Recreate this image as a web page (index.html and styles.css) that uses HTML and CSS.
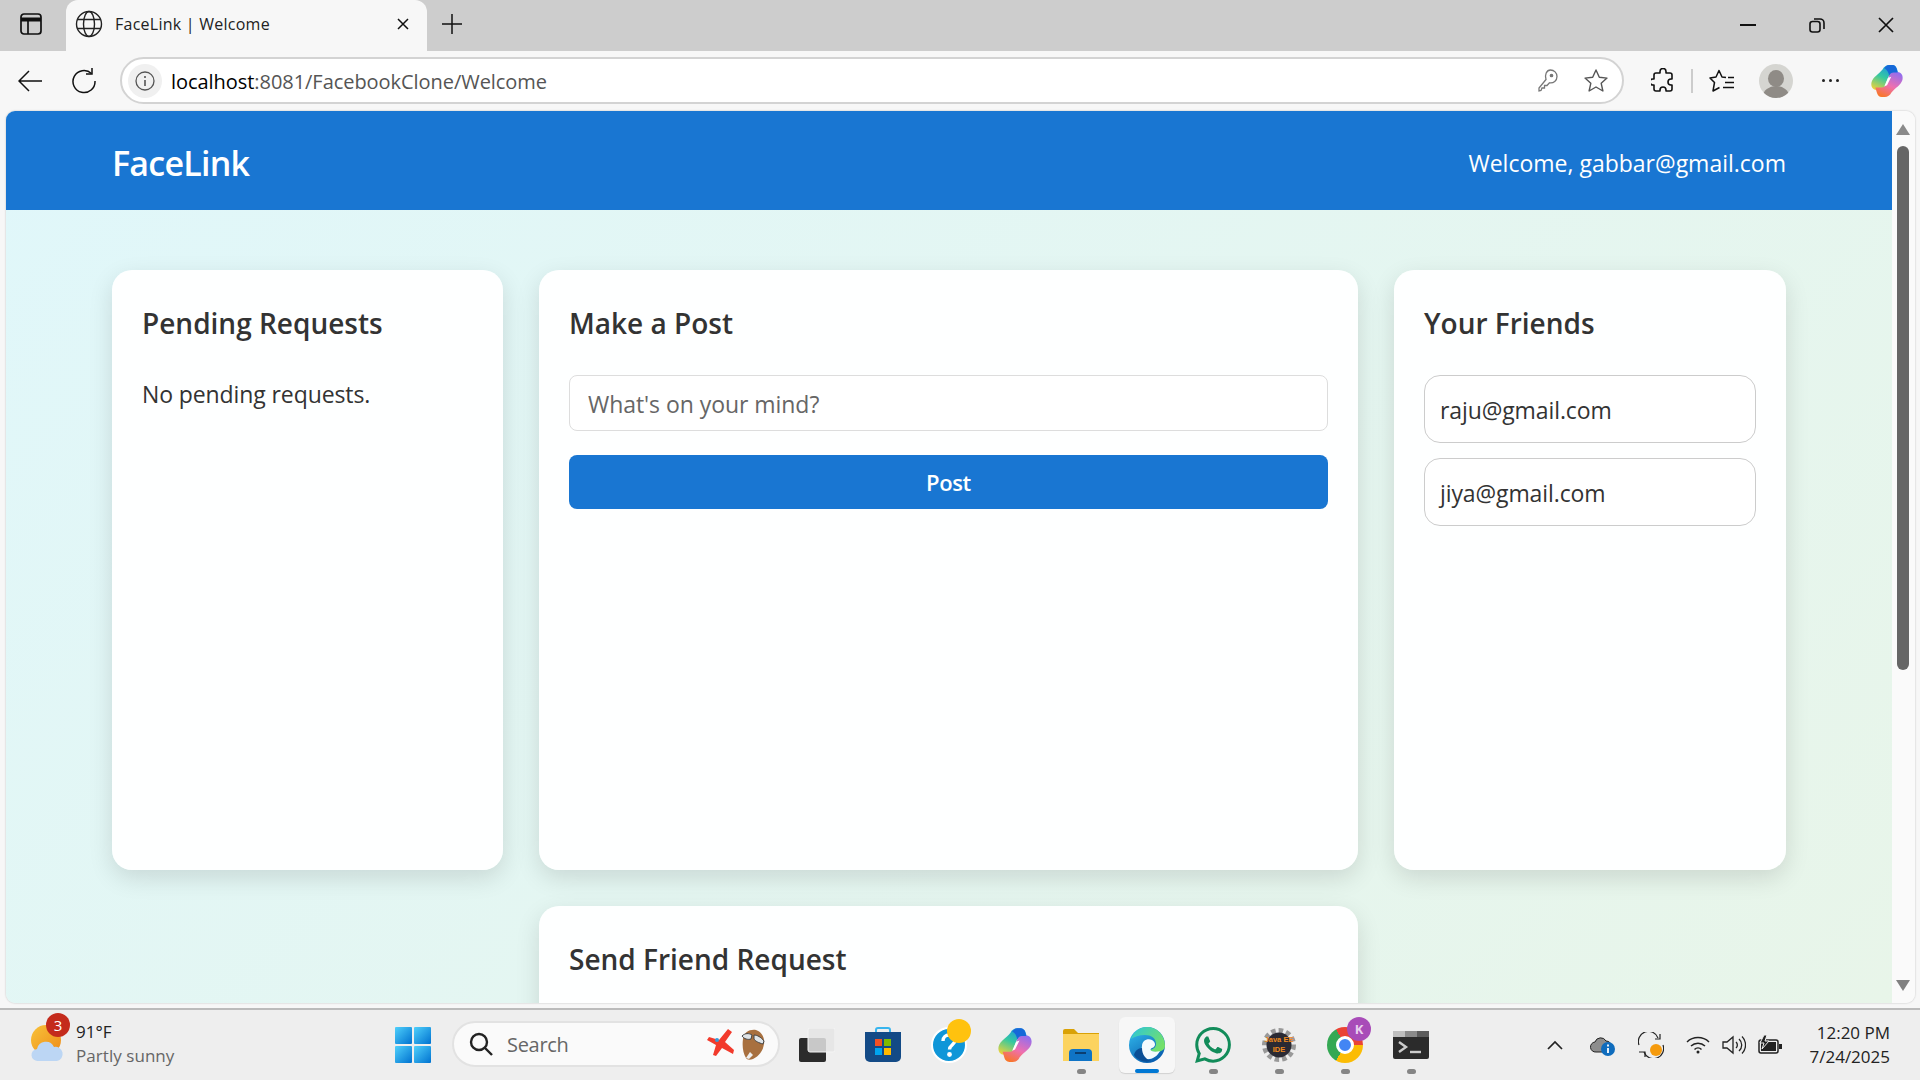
FILE: index.html
```html
<!DOCTYPE html>
<html lang="en">
<head>
  <meta charset="UTF-8">
  <title>FaceLink | Welcome</title>
  <link rel="stylesheet" href="styles.css">
</head>
<body>
  <svg class="defs" width="0" height="0">
    <defs>
      <linearGradient id="cop-a" x1="0.7" y1="0" x2="0.2" y2="1">
        <stop offset="0" stop-color="#1b8fe8"/>
        <stop offset="0.5" stop-color="#35c9a0"/>
        <stop offset="1" stop-color="#e8d23c"/>
      </linearGradient>
      <linearGradient id="cop-b" x1="0.8" y1="0" x2="0.3" y2="1">
        <stop offset="0" stop-color="#8f6ef0"/>
        <stop offset="0.55" stop-color="#ee6fb0"/>
        <stop offset="1" stop-color="#f8762c"/>
      </linearGradient>
      <linearGradient id="edge-a" x1="0" y1="0" x2="0.6" y2="1">
        <stop offset="0" stop-color="#35c1f1"/>
        <stop offset="1" stop-color="#0a5fb0"/>
      </linearGradient>
      <linearGradient id="edge-b" x1="0" y1="0" x2="1" y2="0.6">
        <stop offset="0" stop-color="#2cc6d8"/>
        <stop offset="1" stop-color="#74e06a"/>
      </linearGradient>
      <linearGradient id="win-a" x1="0" y1="0" x2="1" y2="1">
        <stop offset="0" stop-color="#4fd0fb"/>
        <stop offset="1" stop-color="#0072d0"/>
      </linearGradient>
      <linearGradient id="sun-a" x1="0" y1="0" x2="1" y2="1">
        <stop offset="0" stop-color="#f8c33a"/>
        <stop offset="1" stop-color="#ee8a18"/>
      </linearGradient>
      <symbol id="copilot" viewBox="0 0 32 32">
        <path d="M12 5C13 2.500 15.500 1 18 1H21C23.500 1 25 3 25.500 5L27 10H21C19 10 17.500 11 17 13L14 21C13 23.500 11.500 24.500 9 24.500H6C2.500 24.500 .5 21 1.500 17 3 12 8 10 12 5Z" fill="url(#cop-a)"/>
        <path d="M20 27C19 29.500 16.500 31 14 31H11C8.500 31 7 29 6.500 27L5 22H11C13 22 14.500 21 15 19L18 11C19 8.500 20.500 7.500 23 7.500H26C29.500 7.500 31.500 11 30.500 15 29 20 24 22 20 27Z" fill="url(#cop-b)"/>
        <path d="M13.500 4C15 2 16.500 1 18 1H21C23 1 24.500 2.500 25 4.500L26 8H22C20 8 19 9 18 11 17.500 8 16 5 13.500 4Z" fill="#1668d8"/>
        <path d="M17 13L20 12 16 20 13.500 21Z" fill="#fff"/>
      </symbol>
    </defs>
  </svg>

  <div class="desktop">
    <!-- tab strip -->
    <div class="tabstrip">
      <span class="sidebar-btn">
        <svg width="22" height="22" viewBox="0 0 22 22" fill="none" stroke="#111" stroke-width="1.700"><rect x="1" y="1" width="20" height="20" rx="3"/><path d="M1 6.500h20" stroke-width="4"/><path d="M8 7v14"/></svg>
      </span>
      <div class="tab">
        <svg width="28" height="28" viewBox="0 0 28 28" fill="none" stroke="#222" stroke-width="1.400"><circle cx="14" cy="14" r="12.500"/><ellipse cx="14" cy="14" rx="5.500" ry="12.500"/><path d="M2.500 9.500h23M2.500 18.500h23"/></svg>
        <span class="tab-title">FaceLink | Welcome</span>
        <svg class="tab-close" width="14" height="14" viewBox="0 0 14 14" stroke="#111" stroke-width="1.500"><path d="M2 2l10 10M12 2L2 12"/></svg>
      </div>
      <svg class="tab-new" width="22" height="22" viewBox="0 0 22 22" stroke="#111" stroke-width="1.500"><path d="M11 1v20M1 11h20"/></svg>
      <div class="win-btns">
        <span class="win-btn"><svg width="16" height="4" viewBox="0 0 16 4"><path d="M0 2h16" stroke="#111" stroke-width="2"/></svg></span>
        <span class="win-btn"><svg width="16" height="16" viewBox="0 0 16 16" fill="none" stroke="#111" stroke-width="1.600"><rect x="1" y="4.500" width="10" height="10.500" rx="2.500"/><path d="M5 2h6a4 4 0 0 1 4 4v6"/></svg></span>
        <span class="win-btn"><svg width="16" height="16" viewBox="0 0 16 16" stroke="#111" stroke-width="1.700"><path d="M1 1l14 14M15 1L1 15"/></svg></span>
      </div>
    </div>

    <!-- address bar -->
    <div class="toolbar">
      <span class="tool tool-back"><svg width="24" height="22" viewBox="0 0 24 22" fill="none" stroke="#111" stroke-width="1.500"><path d="M24 11H1M11 1L1 11l10 10"/></svg></span>
      <span class="tool tool-reload"><svg width="26" height="26" viewBox="0 0 26 26" fill="none" stroke="#111" stroke-width="1.500"><path d="M20.500 5.500A11 11 0 1 0 24 13"/><path d="M21 0v6h-6"/></svg></span>
      <div class="urlbar">
        <span class="site-info"><svg width="20" height="20" viewBox="0 0 20 20" fill="none" stroke="#555" stroke-width="1.300"><circle cx="10" cy="10" r="9"/><path d="M10 9v6M10 5v2" stroke-width="1.600"/></svg></span>
        <span class="url"><span class="url-host">localhost</span>:8081/FacebookClone/Welcome</span>
        <svg class="url-key" width="20" height="24" viewBox="0 0 20 24" fill="none" stroke="#777" stroke-width="1.300"><path d="M12.500 1a6.500 6.500 0 0 1 6.500 6.500c0 4-3.500 7-7.500 6.300L9 16.500H6.500V19H4l-1 2.500-2 .5v-3l7-8.500C6.500 6 8.500 1 12.500 1Z"/><circle cx="13.500" cy="6.500" r="1.200" fill="#777"/></svg>
        <svg class="url-star" width="26" height="26" viewBox="0 0 26 26" fill="none" stroke="#555" stroke-width="1.400" stroke-linejoin="round"><path d="M13 2l3.300 7.300 7.700.8-5.800 5.200 1.700 7.700L13 19l-6.900 4 1.700-7.700L2 10.100l7.700-.8Z"/></svg>
      </div>
      <span class="tool tool-ext"><svg width="24" height="26" viewBox="0 0 24 26" fill="none" stroke="#111" stroke-width="1.600" stroke-linejoin="round"><path d="M9 3.500a3 3 0 0 1 6 0V5h4a2 2 0 0 1 2 2v4h-1a3 3 0 0 0 0 6h1v4a2 2 0 0 1-2 2h-4v-1a3 3 0 0 0-6 0v1H5a2 2 0 0 1-2-2v-4H2a3 3 0 0 1 0-6h1V7a2 2 0 0 1 2-2h4Z"/></svg></span>
      <span class="tool-sep"></span>
      <span class="tool tool-fav"><svg width="26" height="26" viewBox="0 0 26 26" fill="none" stroke="#111" stroke-width="1.500" stroke-linejoin="round"><path d="M17 9.500L13 9 10 2.500 7 9 1 10l4.500 4.500L4 23l6.500-3.500"/><path d="M19 9.500h6M16 14.500h9M14 19.500h11"/></svg></span>
      <span class="tool tool-avatar"><span class="avatar-head"></span><span class="avatar-body"></span></span>
      <span class="tool tool-more"><i></i><i></i><i></i></span>
      <svg class="tool-copilot" width="34" height="34"><use href="#copilot"/></svg>
    </div>

    <!-- browser content -->
    <div class="viewport">
      <div class="page">
        <header class="site-header">
          <h1 class="logo">FaceLink</h1>
          <span class="welcome">Welcome, gabbar@gmail.com</span>
        </header>
        <main class="grid">
          <section class="card">
            <h2>Pending Requests</h2>
            <p class="empty">No pending requests.</p>
          </section>
          <section class="card">
            <h2>Make a Post</h2>
            <input class="post-input" type="text" placeholder="What's on your mind?">
            <button class="post-btn">Post</button>
          </section>
          <section class="card">
            <h2>Your Friends</h2>
            <ul class="friends">
              <li>raju@gmail.com</li>
              <li>jiya@gmail.com</li>
            </ul>
          </section>
          <section class="card card-send">
            <h2>Send Friend Request</h2>
          </section>
        </main>
      </div>
      <div class="scrollbar">
        <span class="arrow-up"></span>
        <span class="thumb"></span>
        <span class="arrow-down"></span>
      </div>
    </div>

    <!-- taskbar -->
    <footer class="taskbar">
      <div class="weather">
        <span class="weather-icon">
          <svg width="36" height="38" viewBox="0 0 36 38"><circle cx="16" cy="15" r="15" fill="url(#sun-a)"/><path d="M8 36a6 6 0 0 1-1-12 9 9 0 0 1 17-2 7 7 0 0 1 3 14Z" fill="#bcd6f4"/></svg>
          <span class="weather-badge">3</span>
        </span>
        <span class="weather-text"><span class="temp">91°F</span><span class="cond">Partly sunny</span></span>
      </div>
      <span class="slot">
        <svg width="36" height="36" viewBox="0 0 36 36" fill="url(#win-a)"><rect width="17" height="17" rx="1"/><rect x="19" width="17" height="17" rx="1"/><rect y="19" width="17" height="17" rx="1"/><rect x="19" y="19" width="17" height="17" rx="1"/></svg>
      </span>
      <div class="search">
        <svg width="24" height="24" viewBox="0 0 24 24" fill="none" stroke="#222" stroke-width="2.400"><circle cx="10" cy="10" r="8"/><path d="M16 16l7 7"/></svg>
        <span class="search-label">Search</span>
        <svg class="search-art" width="60" height="34" viewBox="0 0 60 34">
          <path d="M22 2l4 3-7 10 9 8-1 4-11-6-6 8-3-1 3-10-9-5 2-3 10 3Z" fill="#f23a2c"/>
          <circle cx="11" cy="13" r="2" fill="#3a9ad9"/>
          <path d="M37 12C38 5 44 2 50 3c6 2 9 8 8 14-1 7-5 12-11 15-3 1-6 1-7-1-3-5-4-12-3-19Z" fill="#a8703f"/>
          <path d="M36 9c3-3 7-3 10-1l-1 4c-3 1-7 0-9-3ZM48 8c3 0 7 2 10 6l-1 3c-4-1-8-3-9-5Z" fill="#dfe4e8" stroke="#444"/>
          <path d="M40 31l4-6 3 3-4 4Z" fill="#eee"/>
        </svg>
      </div>
      <div class="slots">
        <span class="slot">
          <svg width="36" height="34" viewBox="0 0 36 34"><rect y="10" width="27" height="24" rx="2" fill="#2b2b2b"/><rect x="9" width="27" height="24" rx="2" fill="#e4e4e4" fill-opacity="0.85" stroke="#f4f4f4"/></svg>
        </span>
        <span class="slot">
          <svg width="36" height="36" viewBox="0 0 36 36"><path d="M11 6V3a2 2 0 0 1 2-2h10a2 2 0 0 1 2 2v3" fill="none" stroke="#38b5ee" stroke-width="2"/><path d="M0 5h36v25a5 5 0 0 1-5 5H5a5 5 0 0 1-5-5Z" fill="#134a86"/><rect x="10" y="12" width="7" height="7" fill="#f25022"/><rect x="19" y="12" width="7" height="7" fill="#7fba00"/><rect x="10" y="21" width="7" height="7" fill="#00a4ef"/><rect x="19" y="21" width="7" height="7" fill="#ffb900"/></svg>
        </span>
        <span class="slot slot-help">
          <svg width="36" height="36" viewBox="0 0 36 36"><circle cx="18" cy="18" r="17" fill="#0f96d8" stroke="#fff" stroke-width="2"/><path d="M12 14c0-4 3-6 6-6s6 2 6 5.500c0 4-5.500 4.500-5.500 9" fill="none" stroke="#fff" stroke-width="3.400"/><circle cx="18.500" cy="27.500" r="2.400" fill="#fff"/></svg>
          <span class="help-dot"></span>
        </span>
        <span class="slot"><svg width="36" height="36"><use href="#copilot"/></svg></span>
        <span class="slot">
          <svg width="36" height="32" viewBox="0 0 36 32"><path d="M0 2a2 2 0 0 1 2-2h9l4 4h21v8H0Z" fill="#d9a106"/><path d="M0 5h36v27H0Z" fill="#fcd35f"/><path d="M6 32V24a4 4 0 0 1 4-4h15a4 4 0 0 1 4 4v8Z" fill="#0f74c6"/><rect x="12" y="23" width="11" height="2" fill="#0b3e70"/></svg>
          <i class="run-dot"></i>
        </span>
        <span class="slot slot-active">
          <svg width="36" height="36" viewBox="0 0 36 36"><circle cx="18" cy="18" r="18" fill="url(#edge-a)"/><path d="M2 12C5 4 11 0 18 0c10 0 18 8 18 19 0 4-5 6-9 6-3 0-5-1-6-2 4-1 6-3 6-6C27 11 22 8 16 8 10 8 5 10 2 12Z" fill="url(#edge-b)"/><path d="M13 19c0-5 5-8 10-6 4 2 4 7 0 8-4 2 1 5 8 3-3 6-9 9-14 8-4-2-5-9-4-13Z" fill="#f3fafd"/><path d="M13 21c0 6 3 11 9 13-7 2-14-1-17-6 1-4 4-7 8-7Z" fill="#0a4f96"/></svg>
          <i class="run-bar"></i>
        </span>
        <span class="slot">
          <svg width="36" height="36" viewBox="0 0 24 24" fill="#128c5a"><path d="M17.472 14.382c-.297-.149-1.758-.867-2.03-.967-.273-.099-.471-.148-.67.15-.197.297-.767.966-.94 1.164-.173.199-.347.223-.644.075-.297-.15-1.255-.463-2.39-1.475-.883-.788-1.48-1.761-1.653-2.059-.173-.297-.018-.458.13-.606.134-.133.298-.347.446-.52.149-.174.198-.298.298-.497.099-.198.05-.371-.025-.52-.075-.149-.669-1.612-.916-2.207-.242-.579-.487-.5-.669-.51-.173-.008-.371-.01-.57-.01-.198 0-.52.074-.792.372-.272.297-1.04 1.016-1.04 2.479 0 1.462 1.065 2.875 1.213 3.074.149.198 2.096 3.2 5.077 4.487.709.306 1.262.489 1.694.625.712.227 1.36.195 1.871.118.571-.085 1.758-.719 2.006-1.413.248-.694.248-1.289.173-1.413-.074-.124-.272-.198-.57-.347m-5.421 7.403h-.004a9.87 9.87 0 01-5.031-1.378l-.361-.214-3.741.982.998-3.648-.235-.374a9.86 9.86 0 01-1.51-5.26c.001-5.45 4.436-9.884 9.888-9.884 2.64 0 5.122 1.03 6.988 2.898a9.825 9.825 0 012.893 6.994c-.003 5.45-4.437 9.884-9.885 9.884m8.413-18.297A11.815 11.815 0 0012.05 0C5.495 0 .16 5.335.157 11.892c0 2.096.547 4.142 1.588 5.945L.057 24l6.305-1.654a11.882 11.882 0 005.683 1.448h.005c6.554 0 11.89-5.335 11.893-11.893a11.821 11.821 0 00-3.48-8.413z"/></svg>
          <i class="run-dot"></i>
        </span>
        <span class="slot">
          <svg width="36" height="36" viewBox="0 0 36 36"><circle cx="18" cy="18" r="14.500" fill="none" stroke="#999" stroke-width="5" stroke-dasharray="4.500 3"/><circle cx="18" cy="18" r="12.500" fill="#2a2a33"/><text class="java-text" x="18" y="15" text-anchor="middle">Java EE</text><text class="java-text" x="18" y="25" text-anchor="middle">IDE</text></svg>
          <i class="run-dot"></i>
        </span>
        <span class="slot slot-chrome">
          <span class="chrome"><span class="chrome-eye"></span></span>
          <span class="chrome-badge">K</span>
          <i class="run-dot"></i>
        </span>
        <span class="slot">
          <svg width="36" height="28" viewBox="0 0 36 28"><rect width="36" height="28" rx="2" fill="#2b2b2b"/><rect width="12" height="6" fill="#bdbdbd"/><rect x="12" width="12" height="6" fill="#8a8a8a"/><rect x="24" width="12" height="6" fill="#5c5c5c"/><path d="M6 11l7 5-7 5" fill="none" stroke="#ccc" stroke-width="2.400"/><path d="M17 21h11" stroke="#ccc" stroke-width="2.400"/></svg>
          <i class="run-dot"></i>
        </span>
      </div>
      <div class="tray">
        <span class="tray-item tray-wide"><svg width="16" height="10" viewBox="0 0 16 10" fill="none" stroke="#222" stroke-width="1.700"><path d="M1 9l7-7 7 7"/></svg></span>
        <span class="tray-item tray-wide"><svg width="26" height="22" viewBox="0 0 26 22"><path d="M6 18a5 5 0 0 1-1-10 6 6 0 0 1 11-1c3 0 5 2 5 5v6Z" fill="#8d8d8d" stroke="#222"/><circle cx="18" cy="15" r="7" fill="#0f6cbd"/><path d="M18 14v5M18 10.500v2" stroke="#fff" stroke-width="1.800"/></svg></span>
        <span class="tray-item tray-wide tray-sync"><svg width="26" height="26" viewBox="0 0 26 26" fill="none" stroke="#222" stroke-width="1.200"><path d="M1 13A10 10 0 0 1 20 6M25 13A10 10 0 0 1 6 20"/><path d="M22 2v5h-5M1 20h6v5"/><circle cx="18" cy="18" r="6" fill="#f59a0c" stroke="none"/></svg></span>
        <span class="tray-item"><svg width="24" height="18" viewBox="0 0 24 18" fill="none" stroke="#222" stroke-width="1.500"><path d="M1 6a16 16 0 0 1 22 0M5 10a10 10 0 0 1 14 0M8.500 13.500a5 5 0 0 1 7 0"/><circle cx="12" cy="16" r="1.500" fill="#222" stroke="none"/></svg></span>
        <span class="tray-item"><svg width="24" height="20" viewBox="0 0 24 20" fill="none" stroke="#222" stroke-width="1.300"><path d="M1 7v6h4l6 5V2L5 7Z"/><path d="M14 7a4 4 0 0 1 0 6M17 4a8 8 0 0 1 0 12M20 1.500a12 12 0 0 1 0 17"/></svg></span>
        <span class="tray-item"><svg width="24" height="20" viewBox="0 0 24 20"><rect x="1" y="5" width="19" height="13" rx="2" fill="none" stroke="#222" stroke-width="1.500"/><rect x="3" y="7" width="15" height="9" fill="#222"/><rect x="21" y="9" width="3" height="5" fill="#222"/><path d="M6 0L2 8h4l-2 6 7-8H7l2-6Z" fill="#222" stroke="#eee"/></svg></span>
        <span class="clock"><span>12:20 PM</span><span>7/24/2025</span></span>
      </div>
    </footer>
  </div>
</body>
</html>
```

FILE: styles.css
```css
* {
  box-sizing: border-box;
}
html, body {
  margin: 0;
  height: 100%;
  overflow: hidden;
}
body {
  font-family: "Open Sans", "Noto Sans", sans-serif;
  color: #333;
}
.defs {
  position: absolute;
}
.desktop {
  display: flex;
  flex-direction: column;
  height: 1080px;
  background-color: #f7f7f7;
}

/* Tab strip */
.tabstrip {
  display: flex;
  align-items: center;
  height: 51px;
  background-color: #cdcdcd;
  flex: none;
}
.sidebar-btn {
  display: flex;
  justify-content: center;
  width: 61px;
  margin-right: 5px;
  margin-bottom: 4px;
}
.tab {
  display: flex;
  align-items: center;
  align-self: stretch;
  width: 361px;
  padding: 0 17px 4px 9px;
  background-color: #f7f7f7;
  border-radius: 12px 12px 0 0;
}
.tab-title {
  margin-left: 12px;
  font-size: 16px;
  letter-spacing: 0.25px;
  color: #222;
  flex: 1;
}
.tab-new {
  margin-left: 14px;
  margin-bottom: 4px;
}
.win-btns {
  display: flex;
  margin-left: auto;
  margin-bottom: 2px;
}
.win-btn {
  display: flex;
  justify-content: center;
  align-items: center;
  width: 69px;
}

/* Toolbar */
.toolbar {
  display: flex;
  align-items: center;
  height: 60px;
  padding-bottom: 1px;
  flex: none;
}
.tool {
  display: flex;
  justify-content: center;
  align-items: center;
  flex: none;
}
.tool-back {
  width: 60px;
}
.tool-reload {
  width: 48px;
}
.urlbar {
  display: flex;
  align-items: center;
  width: 1504px;
  height: 47px;
  margin-left: 12px;
  padding: 0 13px 0 6px;
  background-color: #fff;
  border: 2px solid #d3d3d3;
  border-radius: 24px;
  flex: none;
}
.site-info {
  display: flex;
  justify-content: center;
  align-items: center;
  width: 34px;
  height: 34px;
  background-color: #f0f0f0;
  border-radius: 50%;
}
.url {
  margin-left: 9px;
  padding-top: 2px;
  font-size: 20px;
  letter-spacing: -0.05px;
  color: #555;
  flex: 1;
}
.url-host {
  color: #000;
}
.url-key {
  margin-right: 25px;
}
.tool-ext {
  width: 78px;
  margin-right: -11px;
}
.tool-sep {
  width: 2px;
  height: 24px;
  background-color: #ccc;
  flex: none;
}
.tool-fav {
  width: 58px;
}
.tool-avatar {
  position: relative;
  display: block;
  width: 34px;
  height: 34px;
  margin-left: 8px;
  background-color: #d5d5d1;
  border-radius: 50%;
  overflow: hidden;
}
.avatar-head {
  position: absolute;
  left: 9px;
  top: 6px;
  width: 16px;
  height: 17px;
  background-color: #8f8b86;
  border-radius: 50%;
}
.avatar-body {
  position: absolute;
  left: 4px;
  top: 22px;
  width: 26px;
  height: 20px;
  background-color: #8f8b86;
  border-radius: 50%;
}
.tool-more {
  gap: 4px;
  width: 74px;
}
.tool-more i {
  width: 3px;
  height: 3px;
  background-color: #222;
  border-radius: 50%;
}
.tool-copilot {
  margin-left: 3px;
  flex: none;
}

/* Page area */
.viewport {
  display: flex;
  height: 892px;
  margin: 0 5px 5px 6px;
  border-radius: 9px;
  overflow: hidden;
  box-shadow: 0 0 2px rgba(0, 0, 0, 0.25);
  flex: none;
}
.page {
  flex: 1;
  overflow: hidden;
  background: linear-gradient(135deg, #e0f7fa, #e8f5e9);
}
.site-header {
  display: flex;
  justify-content: space-between;
  align-items: center;
  height: 99px;
  padding: 4px 106px 0 106px;
  background-color: #1976d2;
  color: #fff;
}
.logo {
  margin: 0;
  font-size: 34px;
  font-weight: 600;
  letter-spacing: -0.75px;
}
.welcome {
  font-size: 23px;
  letter-spacing: 0;
}
.grid {
  display: grid;
  grid-template-columns: 391px 1fr 392px;
  gap: 36px;
  padding: 60px 106px 0 106px;
}
.card {
  min-height: 600px;
  padding: 30px;
  background-color: rgba(255, 255, 255, 0.96);
  border-radius: 20px;
  box-shadow: 0 8px 24px rgba(0, 0, 0, 0.12);
}
.card h2 {
  margin: 0 0 29px;
  font-size: 28px;
  font-weight: 600;
  line-height: 46px;
  letter-spacing: 0;
  color: #333;
}
.card-send {
  grid-column: 2;
}
.empty {
  margin: 0;
  font-size: 23px;
  line-height: 38px;
  letter-spacing: -0.1px;
}
.post-input {
  display: block;
  width: 100%;
  height: 56px;
  padding: 2px 18px 0;
  font-family: inherit;
  font-size: 23px;
  letter-spacing: -0.05px;
  background-color: #fff;
  border: 1px solid #ddd;
  border-radius: 8px;
}
.post-input::placeholder {
  color: #666;
}
.post-btn {
  display: block;
  width: 100%;
  height: 54px;
  margin-top: 24px;
  padding-right: 6px;
  font-family: inherit;
  font-size: 22px;
  font-weight: 600;
  letter-spacing: -0.4px;
  color: #fff;
  background-color: #1976d2;
  border: none;
  border-radius: 8px;
}
.friends {
  display: flex;
  flex-direction: column;
  gap: 15px;
  margin: 0;
  padding: 0;
  list-style: none;
}
.friends li {
  height: 68px;
  padding: 11px 15px 0;
  font-size: 23px;
  letter-spacing: -0.1px;
  line-height: 46px;
  background-color: #fff;
  border: 1px solid #ccc;
  border-radius: 16px;
}

/* Scrollbar */
.scrollbar {
  display: flex;
  flex-direction: column;
  align-items: center;
  width: 23px;
  padding-right: 2px;
  background-color: #fafafa;
  flex: none;
}
.arrow-up {
  width: 0;
  height: 0;
  margin-top: 13px;
  border-left: 7px solid transparent;
  border-right: 7px solid transparent;
  border-bottom: 11px solid #8a8a8a;
}
.thumb {
  width: 12px;
  height: 524px;
  margin-top: 11px;
  background-color: #666;
  border-radius: 6px;
}
.arrow-down {
  width: 0;
  height: 0;
  margin-top: auto;
  margin-bottom: 12px;
  border-left: 7px solid transparent;
  border-right: 7px solid transparent;
  border-top: 11px solid #808080;
}

/* Taskbar */
.taskbar {
  display: flex;
  align-items: center;
  height: 72px;
  background-color: #eee;
  border-top: 2px solid #bbb;
  flex: none;
}
.weather {
  display: flex;
  align-items: center;
  width: 380px;
  padding-left: 30px;
  padding-bottom: 2px;
  flex: none;
}
.weather-icon {
  position: relative;
  display: block;
  width: 46px;
  height: 38px;
}
.weather-badge {
  position: absolute;
  left: 16px;
  top: -12px;
  width: 24px;
  height: 24px;
  font-size: 15px;
  line-height: 24px;
  text-align: center;
  color: #fff;
  background-color: #c42b1c;
  border-radius: 50%;
}
.weather-text {
  display: flex;
  flex-direction: column;
  font-size: 17px;
  line-height: 24px;
  letter-spacing: 0.05px;
}
.temp {
  color: #222;
}
.cond {
  color: #666;
}
.slot {
  position: relative;
  display: flex;
  justify-content: center;
  align-items: center;
  width: 66px;
  height: 70px;
  flex: none;
}
.slots {
  display: flex;
  margin-left: 4px;
}
.search {
  display: flex;
  align-items: center;
  width: 328px;
  height: 46px;
  margin-left: 6px;
  margin-bottom: 2px;
  padding: 0 12px 0 15px;
  background-color: #fafafa;
  border: 2px solid #e2e2e2;
  border-radius: 23px;
  flex: none;
}
.search-label {
  margin-left: 14px;
  font-size: 20px;
  letter-spacing: -0.3px;
  color: #666;
  flex: 1;
}
.slot-help .help-dot {
  position: absolute;
  left: 31px;
  top: 9px;
  width: 24px;
  height: 24px;
  background-color: #ffc20e;
  border-radius: 50%;
}
.slot-active {
  width: 56px;
  height: 56px;
  margin: 7px 5px 0;
  background-color: #f7f7f7;
  border-radius: 6px;
  box-shadow: 0 1px 1px rgba(0, 0, 0, 0.12);
  align-self: flex-start;
}
.run-dot {
  position: absolute;
  left: 29px;
  bottom: 6px;
  width: 9px;
  height: 5px;
  background-color: #858585;
  border-radius: 3px;
}
.run-bar {
  position: absolute;
  left: 16px;
  bottom: 0;
  width: 24px;
  height: 4px;
  background-color: #0078d4;
  border-radius: 2px;
}
.java-text {
  font-family: "Liberation Sans", sans-serif;
  font-size: 7.5px;
  font-weight: 700;
  fill: #f08a1d;
}
.chrome {
  display: flex;
  justify-content: center;
  align-items: center;
  width: 36px;
  height: 36px;
  background: conic-gradient(#ea4335 0 90deg, #fbbc04 90deg 210deg, #34a853 210deg 330deg, #ea4335 330deg);
  border-radius: 50%;
}
.chrome-eye {
  width: 18px;
  height: 18px;
  background-color: #4285f4;
  border: 3px solid #fff;
  border-radius: 50%;
}
.chrome-badge {
  position: absolute;
  left: 35px;
  top: 7px;
  width: 24px;
  height: 24px;
  font-size: 13px;
  font-weight: 700;
  line-height: 24px;
  text-align: center;
  color: #e8d0ee;
  background-color: #a84bb8;
  border-radius: 50%;
}
.tray {
  display: flex;
  align-items: center;
  margin-left: auto;
  padding-right: 30px;
}
.tray-item {
  display: flex;
  justify-content: center;
  width: 36px;
}
.tray-wide {
  width: 48px;
}
.tray-sync {
  margin-right: 5px;
}
.clock {
  display: flex;
  flex-direction: column;
  align-items: flex-end;
  width: 102px;
  padding-bottom: 1px;
  font-size: 17px;
  line-height: 24px;
  color: #222;
}
```
